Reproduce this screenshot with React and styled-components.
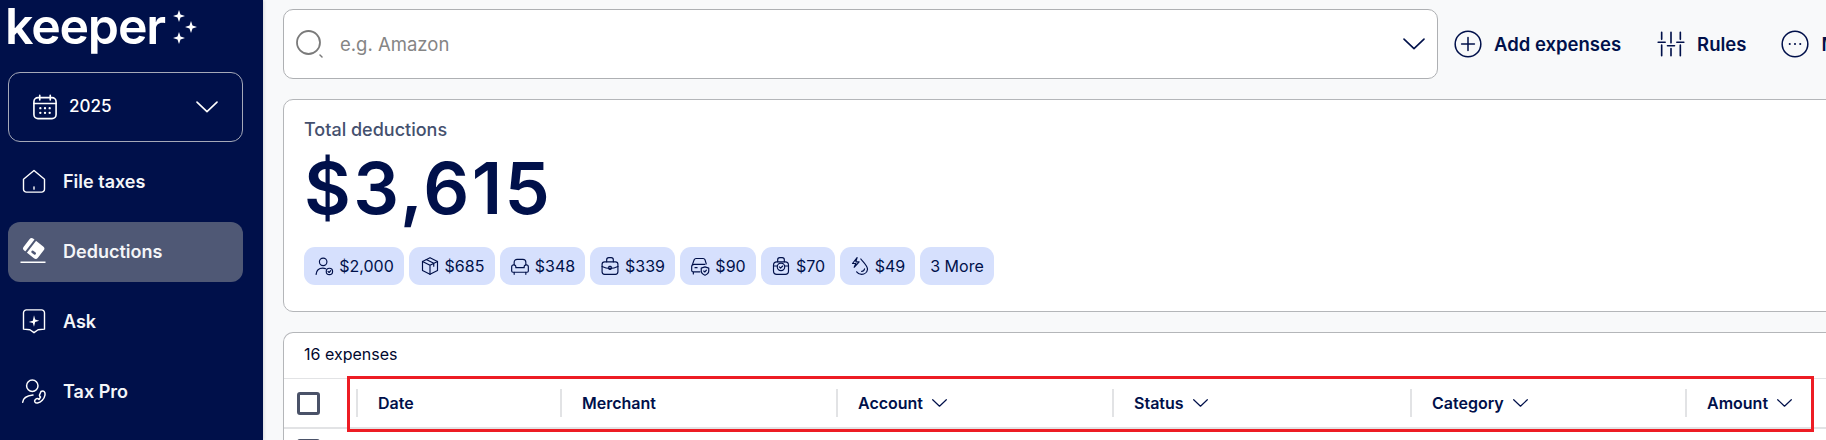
import React from 'react';
import styled, { createGlobalStyle } from 'styled-components';

const GlobalStyle = createGlobalStyle`
    html, body {
        margin: 0;
        height: 440px;
        overflow: hidden;
        background: #f8f9fa;
        font-family: Inter, "Liberation Sans", sans-serif;
    }
`;

const navy = '#00104a';

const Page = styled.div`
    display: flex;
    width: 1826px;
    height: 440px;
    overflow: hidden;
`;

const Sidebar = styled.aside`
    flex: 0 0 263px;
    box-sizing: border-box;
    height: 440px;
    padding: 0 20px 0 8px;
    background: ${navy};
    box-shadow: 1px 0 3px rgba(0, 0, 0, 0.12);
    display: flex;
    flex-direction: column;
`;

const Logo = styled.div`
    display: flex;
    align-items: flex-start;
    height: 72px;
    gap: 8px;
`;

const LogoText = styled.span`
    font-size: 50px;
    line-height: 52px;
    margin-left: -3px;
    font-weight: 600;
    letter-spacing: -1.2px;
    color: #fff;
`;

const YearButton = styled.div`
    box-sizing: border-box;
    height: 70px;
    padding: 0 24px 0 22px;
    margin-bottom: 10px;
    display: flex;
    align-items: center;
    border: 1px solid #a5a9b8;
    border-radius: 12px;
    color: #fff;
    font-size: 17px;
    font-weight: 500;
`;

const YearLabel = styled.span`
    flex: 1;
    margin: -2px 0 0 10px;
`;

const NavList = styled.nav`
    display: flex;
    flex-direction: column;
    gap: 10px;
`;

const NavItem = styled.div`
    height: 60px;
    padding: 0 0 2px 12px;
    box-sizing: border-box;
    display: flex;
    align-items: center;
    gap: 15px;
    border-radius: 12px;
    background: ${(p) => (p.$active ? '#4f5875' : 'transparent')};
    color: #f4f5f8;
    font-size: 18px;
    font-weight: 600;
`;

const Main = styled.main`
    flex: 0 0 1700px;
    box-sizing: border-box;
    padding: 9px 0 0 20px;
    display: flex;
    flex-direction: column;
    gap: 20px;
`;

const TopBar = styled.div`
    display: flex;
    align-items: center;
    height: 70px;
    flex-shrink: 0;
`;

const SearchBox = styled.div`
    flex: 0 0 1155px;
    box-sizing: border-box;
    height: 70px;
    padding: 0 12px;
    display: flex;
    align-items: center;
    background: #fff;
    border: 1px solid #aeb0b3;
    border-radius: 10px;
`;

const Placeholder = styled.span`
    flex: 1;
    margin-left: 16px;
    color: #858585;
    font-size: 18.500px;
`;

const Action = styled.div`
    display: flex;
    align-items: center;
    gap: 12px;
    margin-left: ${(p) => p.$gap}px;
    color: ${navy};
    font-size: 18.500px;
    font-weight: 600;
    white-space: nowrap;
`;

const Card = styled.section`
    flex-shrink: 0;
    background: #fff;
    border: 1px solid #b4b6b9;
    border-radius: 10px;
    border-top-right-radius: 0;
    border-bottom-right-radius: 0;
`;

const SummaryCard = styled(Card)`
    box-sizing: border-box;
    height: 213px;
    padding: 19px 20px 0;
`;

const SummaryTitle = styled.div`
    color: #44506e;
    font-size: 18px;
    line-height: 22px;
    font-weight: 500;
`;

const SummaryAmount = styled.div`
    margin-top: 5px;
    color: ${navy};
    font-size: 72px;
    line-height: 84px;
    font-weight: 600;
    letter-spacing: 2.400px;
`;

const ChipRow = styled.div`
    margin-top: 17px;
    display: flex;
    gap: 5px;
`;

const Chip = styled.div`
    box-sizing: border-box;
    width: ${(p) => p.$width}px;
    height: 38px;
    display: flex;
    align-items: center;
    justify-content: center;
    gap: 5px;
    border-radius: 11px;
    background: #d6e0fd;
    color: ${navy};
    font-size: 16px;
`;

const TableCard = styled(Card)`
    border-bottom: 0;
    height: 120px;
`;

const CountRow = styled.div`
    height: 46px;
    padding: 0 0 4px 20px;
    box-sizing: border-box;
    display: flex;
    align-items: center;
    color: #00082e;
    font-size: 16px;
    border-bottom: 1px solid #e2e3e5;
`;

const HeaderRow = styled.div`
    height: 48px;
    display: flex;
    align-items: center;
    border-bottom: 2px solid #e2e3e5;
`;

const CheckCell = styled.div`
    flex: 0 0 72px;
    padding-left: 13px;
    box-sizing: border-box;
    display: flex;
    align-items: center;
`;

const Checkbox = styled.div`
    box-sizing: border-box;
    width: 23px;
    height: 23px;
    border: 3px solid #4a5268;
    border-radius: 3px;
`;

const HeaderCells = styled.div`
    position: relative;
    display: flex;
    height: 100%;
    align-items: center;
`;

const HeaderCell = styled.div`
    box-sizing: border-box;
    width: ${(p) => p.$width}px;
    height: 28px;
    padding-left: 20px;
    display: flex;
    align-items: center;
    gap: 9px;
    border-left: 2px solid #e2e3e5;
    color: ${navy};
    font-size: 16px;
    font-weight: 600;
`;

const Highlight = styled.div`
    position: absolute;
    left: -9px;
    top: -3px;
    width: 1467px;
    height: 56px;
    box-sizing: border-box;
    border: 3px solid #ed1c24;
    pointer-events: none;
`;

const BodyRow = styled.div`
    height: 40px;
    padding-top: 10px;
`;

const Chevron = ({ size = 22, color = navy, sw = 1.6 }) => (
    <svg width={size} height={size * 0.55} viewBox="0 0 22 12" fill="none" stroke={color} strokeWidth={sw * (22 / size)} strokeLinecap="round" strokeLinejoin="round">
        <path d="M1 1l10 9.500L21 1" />
    </svg>
);

const Ic = ({ size = 22, color = navy, sw = 1.5, children, vb = 24 }) => (
    <svg width={size} height={size} viewBox={`0 0 ${vb} ${vb}`} fill="none" stroke={color} strokeWidth={sw} strokeLinecap="round" strokeLinejoin="round">
        {children}
    </svg>
);

const chips = [
    { w: 100, t: '$2,000', i: <><circle cx="11" cy="7" r="4.500" /><path d="M2.500 22c.5-5 3.500-7.500 8-7.500 1.500 0 2.500.3 3.500.8" /><circle cx="18.500" cy="18.500" r="3.800" /><path d="M16.800 18.500l1.300 1.300 2-2.300" /></> },
    { w: 86, t: '$685', i: <><path d="M12 2l9 4.500v11L12 22l-9-4.500v-11z" /><path d="M3 6.500l9 4.500 9-4.500M12 11v11M7.500 4.300l9 4.500v3.500" /></> },
    { w: 85, t: '$348', i: <><path d="M5 11V7.500A3.500 3.500 0 0 1 8.500 4h7A3.500 3.500 0 0 1 19 7.500V11" /><path d="M7 14h10v-1a2.500 2.500 0 0 1 5 0v5a1.500 1.500 0 0 1-1.500 1.500h-17A1.500 1.500 0 0 1 2 18v-5a2.500 2.500 0 0 1 5 0z" /><path d="M5 19.500V22M19 19.500V22" /></> },
    { w: 85, t: '$339', i: <><rect x="2.500" y="7" width="19" height="15" rx="3" /><path d="M8 7V4.500A2.500 2.500 0 0 1 10.500 2h3A2.500 2.500 0 0 1 16 4.500V7M2.500 12.500c6 3 13 3 19 0" /><rect x="10.500" y="12.500" width="3" height="3.500" rx="1" /></> },
    { w: 76, t: '$90', i: <><path d="M3 10l2-5.500A2.500 2.500 0 0 1 7.500 3h8A2.500 2.500 0 0 1 18 4.500l1.500 5" /><path d="M12 19H3.500A1.500 1.500 0 0 1 2 17.500V13a3 3 0 0 1 3-3h13M6 14h2.500M4 19v2.500" /><path d="M18 13l4.500 1.500v3.500c0 2.500-2 4-4.500 5-2.500-1-4.500-2.500-4.500-5v-3.500z" /><path d="M16.500 18l1.200 1.200 2-2.200" /></> },
    { w: 74, t: '$70', i: <><rect x="3" y="7" width="18" height="15" rx="4" /><path d="M8 7V4.500A2.500 2.500 0 0 1 10.500 2h3A2.500 2.500 0 0 1 16 4.500V7M3 12h4M17 12h4" /><circle cx="12" cy="13" r="4.500" /><path d="M10 13l1.500 1.500 2.500-2.500" /></> },
    { w: 75, t: '$49', i: <><path d="M13 3.500c1 2 8 7.500 8 12.500a7 7 0 0 1-7 6c-2.500 0-4.500-1-6-3" /><path d="M8.500 2L3 9h4l-2 4.500L11 7H7z" /><path d="M14 18.500c1.500 0 3-1 3.500-3" /></> },
];

const App = () => (
    <Page>
        <GlobalStyle />
        <Sidebar>
            <Logo>
                <LogoText>keeper</LogoText>
                <svg width="26" height="36" viewBox="0 0 26 36" fill="#fff" style={{ marginTop: 10 }}>
                    <path d="M6 0l1.500 4.500L12 6 7.500 7.500 6 12 4.500 7.500 0 6l4.500-1.500z" />
                    <path d="M6 0l1.500 4.500L12 6 7.500 7.500 6 12 4.500 7.500 0 6l4.500-1.500z" transform="translate(12 11)" />
                    <path d="M6 0l1.500 4.500L12 6 7.500 7.500 6 12 4.500 7.500 0 6l4.500-1.500z" transform="translate(0 22)" />
                </svg>
            </Logo>
            <YearButton>
                <Ic size={28} color="#fff" sw={1.400}>
                    <rect x="2.500" y="4" width="19" height="18" rx="3.500" />
                    <path d="M2.500 9h19M7.500 2v4M16.500 2v4" />
                    <path d="M8 13h.01M12 13h.01M16 13h.01M8 17h.01M12 17h.01M16 17h.01" strokeWidth="2" />
                </Ic>
                <YearLabel>2025</YearLabel>
                <Chevron size={22} color="#fff" />
            </YearButton>
            <NavList>
                <NavItem>
                    <Ic size={28} color="#fff" sw={1.200}>
                        <path d="M3 10.500L12 3l9 7.500V19a2.500 2.500 0 0 1-2.500 2.500h-13A2.500 2.500 0 0 1 3 19z" />
                        <path d="M12 17v2" />
                    </Ic>
                    File taxes
                </NavItem>
                <NavItem $active>
                    <svg width="28" height="28" viewBox="0 0 28 28" fill="#fff">
                        <g transform="translate(13.700 11.500) rotate(38)">
                            <rect x="-9" y="-7.500" width="18" height="15" rx="2.800" />
                            <rect x="-4.800" y="-8.500" width="2" height="17" fill="#4f5875" />
                            <rect x="0" y="2" width="5" height="2.600" rx="1" fill="#4f5875" />
                        </g>
                        <rect x="0.500" y="24.500" width="25" height="1.500" />
                    </svg>
                    Deductions
                </NavItem>
                <NavItem>
                    <Ic size={28} color="#fff" sw={1.200}>
                        <path d="M5.500 2.500h13A2.500 2.500 0 0 1 21 5v14l-5.500.5L12 22l-3.500-2.500L3 19V5a2.500 2.500 0 0 1 2.500-2.500z" />
                        <path d="M12 7l1 3.800 3.500 1-3.500 1L12 17l-1-3.200-3.500-1 3.500-1z" fill="#fff" stroke="none" />
                    </Ic>
                    Ask
                </NavItem>
                <NavItem>
                    <Ic size={28} color="#fff" sw={1.500} vb={28}>
                        <circle cx="12.300" cy="8.700" r="5.700" />
                        <path d="M2.700 25.300c.3-4 3.300-6.500 10.300-7.300" />
                        <path d="M21 14.500c2.500-1.500 4.500.5 4 3.500-.7 4-4 7.500-7.500 8-2.500.3-3.500-1.500-2.500-3l1-1c1-.8 2.200-.3 3 .5l1.500-2.500c-1-.6-1.300-1.800-.8-2.500z" />
                    </Ic>
                    Tax Pro
                </NavItem>
            </NavList>
        </Sidebar>
        <Main>
            <TopBar>
                <SearchBox>
                    <svg width="28" height="28" viewBox="0 0 28 28" fill="none" stroke="#7a7a7a" strokeLinecap="round">
                        <circle cx="12.500" cy="12.500" r="11.500" strokeWidth="1.800" />
                        <path d="M24 25l2 2" strokeWidth="1.500" />
                    </svg>
                    <Placeholder>e.g. Amazon</Placeholder>
                    <Chevron size={22} />
                </SearchBox>
                <Action $gap={16}>
                    <Ic size={28} sw={1.300}>
                        <circle cx="12" cy="12" r="11" />
                        <path d="M12 6.500v11M6.500 12h11" />
                    </Ic>
                    Add expenses
                </Action>
                <Action $gap={36}>
                    <Ic size={28} sw={1.400}>
                        <path d="M4 2v6M4 13v9M12 2v9M12 16v6M20 2v6M20 13v9M1 10.500h6M9 13.500h6M17 10.500h6" />
                    </Ic>
                    Rules
                </Action>
                <Action $gap={35}>
                    <Ic size={28} sw={1.300}>
                        <circle cx="12" cy="12" r="11" />
                        <path d="M7.500 12h.01M12 12h.01M16.500 12h.01" strokeWidth="1.800" />
                    </Ic>
                    More
                </Action>
            </TopBar>
            <SummaryCard>
                <SummaryTitle>Total deductions</SummaryTitle>
                <SummaryAmount>$3,615</SummaryAmount>
                <ChipRow>
                    {chips.map((c) => (
                        <Chip key={c.t} $width={c.w}>
                            <Ic size={20} sw={1.400}>{c.i}</Ic>
                            {c.t}
                        </Chip>
                    ))}
                    <Chip $width={74}>3 More</Chip>
                </ChipRow>
            </SummaryCard>
            <TableCard>
                <CountRow>16 expenses</CountRow>
                <HeaderRow>
                    <CheckCell><Checkbox /></CheckCell>
                    <HeaderCells>
                        <HeaderCell $width={204}>Date</HeaderCell>
                        <HeaderCell $width={276}>Merchant</HeaderCell>
                        <HeaderCell $width={276}>Account <Chevron size={15} sw={1.200} /></HeaderCell>
                        <HeaderCell $width={298}>Status <Chevron size={15} sw={1.200} /></HeaderCell>
                        <HeaderCell $width={275}>Category <Chevron size={15} sw={1.200} /></HeaderCell>
                        <HeaderCell $width={130}>Amount <Chevron size={15} sw={1.200} /></HeaderCell>
                        <Highlight />
                    </HeaderCells>
                </HeaderRow>
                <BodyRow>
                    <CheckCell><Checkbox /></CheckCell>
                </BodyRow>
            </TableCard>
        </Main>
    </Page>
);

export default App;
